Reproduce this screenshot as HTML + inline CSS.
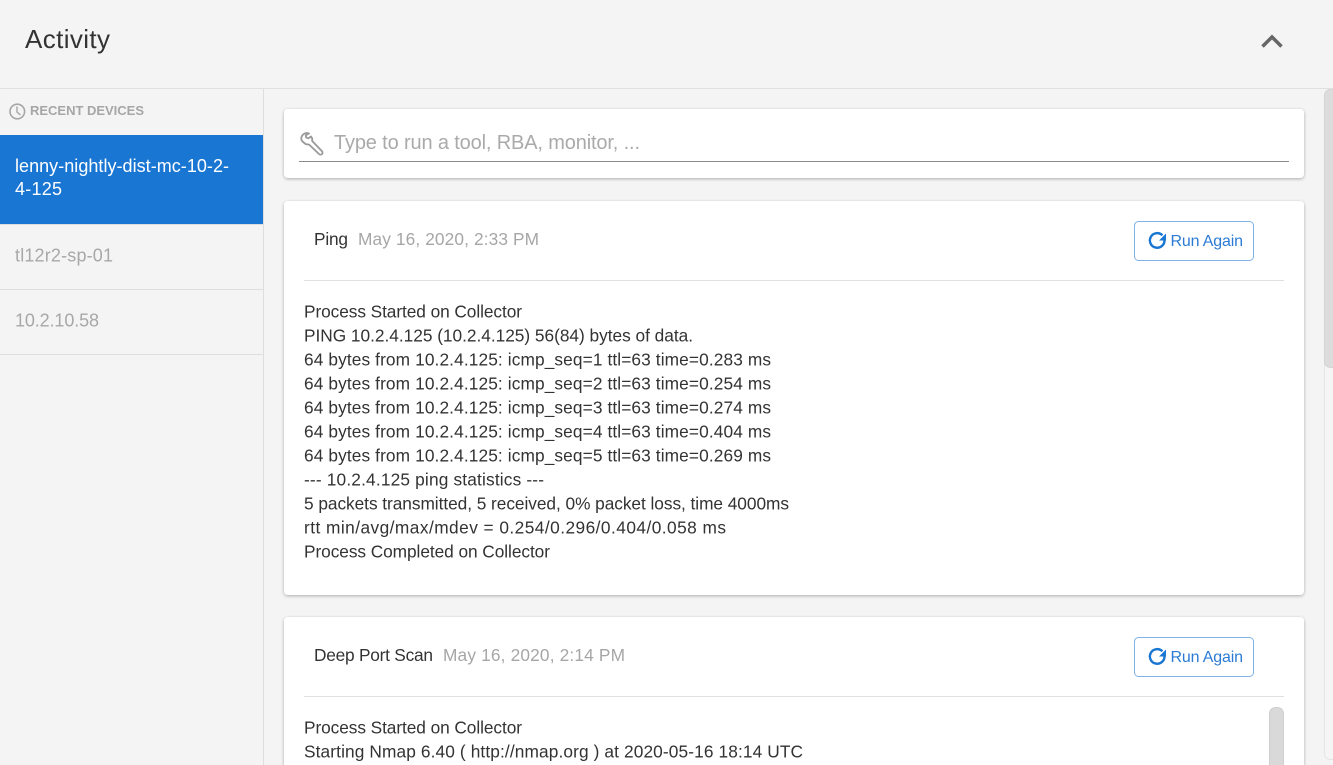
<!DOCTYPE html>
<html>
<head>
<meta charset="utf-8">
<style>
html,body{margin:0;padding:0;width:1333px;height:765px;overflow:hidden;background:#f4f4f4}
svg{display:block}
text{font-family:"Liberation Sans",sans-serif;font-size:17.3px;fill:#333}
.g{fill:#a6a6a6}
.b{fill:#2b7bd6;font-size:16px}
.w{fill:#fff;font-size:18px}
.s{fill:#a8a8a8;font-size:18px}
</style>
</head>
<body>
<svg width="1333" height="765" viewBox="0 0 1333 765" xmlns="http://www.w3.org/2000/svg">
<defs>
<filter id="sh" x="-5%" y="-20%" width="110%" height="140%"><feDropShadow dx="0" dy="1" stdDeviation="1.5" flood-color="#000" flood-opacity=".3"/></filter>
</defs>
<rect width="1333" height="765" fill="#f4f4f4"/>
<rect x="0" y="88" width="1333" height="1" fill="#e0e0e0"/>
<text x="25" y="48" style="font-size:26px;fill:#333" textLength="85" lengthAdjust="spacing">Activity</text>
<path d="M1262.500 46.500L1272 37l9.500 9.500" fill="none" stroke="#666" stroke-width="3.500"/>

<rect x="263" y="89" width="1" height="676" fill="#dedede"/>
<circle cx="17.300" cy="111.500" r="7.300" fill="none" stroke="#a6a6a6" stroke-width="1.600"/>
<path d="M17 106.500V112L20.500 115" fill="none" stroke="#a6a6a6" stroke-width="1.400"/>
<text x="30" y="115" style="font-size:13px;font-weight:bold;fill:#a6a6a6" textLength="114" lengthAdjust="spacing">RECENT DEVICES</text>
<rect x="0" y="135" width="263" height="89" fill="#1976d2"/>
<text class="w" x="15" y="172" textLength="214" lengthAdjust="spacing">lenny-nightly-dist-mc-10-2-</text>
<text class="w" x="15" y="195" textLength="47" lengthAdjust="spacing">4-125</text>
<rect x="0" y="224" width="263" height="1" fill="#dedede"/>
<text class="s" x="15" y="261.500" textLength="98" lengthAdjust="spacing">tl12r2-sp-01</text>
<rect x="0" y="289" width="263" height="1" fill="#dedede"/>
<text class="s" x="15" y="326.500" textLength="84" lengthAdjust="spacing">10.2.10.58</text>
<rect x="0" y="354" width="263" height="1" fill="#dedede"/>

<rect x="284" y="109" width="1020" height="69" rx="4" fill="#fff" filter="url(#sh)"/>
<path d="M309 133.500a5.500 5.500 0 0 0-7.500 6.500l1 1.500 3 2.500 2 .5 1.500 0 10 9.500a2 2 0 0 0 3-2.800l-9.800-10.200 0-2.500-1.200-2-2.500 1.800-2.300-.8-.5-2.200z" fill="none" stroke="#9a9a9a" stroke-width="1.800" stroke-linejoin="round"/>
<text x="334" y="149" style="font-size:20px;fill:#aaa" textLength="306" lengthAdjust="spacing">Type to run a tool, RBA, monitor, ...</text>
<rect x="299" y="161" width="990" height="1" fill="#8a8a8a"/>

<rect x="284" y="201" width="1020" height="394" rx="4" fill="#fff" filter="url(#sh)"/>
<text x="314" y="245" textLength="34" lengthAdjust="spacing">Ping</text>
<text class="g" x="358" y="245" textLength="181" lengthAdjust="spacing">May 16, 2020, 2:33 PM</text>
<rect x="1134.500" y="221.500" width="119" height="39" rx="4" fill="#fff" stroke="#7fb2e8"/>
<path d="M1164.500 240.500a7.300 7.300 0 1 1-2.100-5.200" fill="none" stroke="#1976d2" stroke-width="2.400"/>
<path d="M1166 233.500v7h-7z" fill="#1976d2"/>
<text class="b" x="1170.500" y="246" textLength="72.500" lengthAdjust="spacing">Run Again</text>
<rect x="304" y="280" width="980" height="1" fill="#e0e0e0"/>
<text x="304" y="317.500" textLength="218" lengthAdjust="spacing">Process Started on Collector</text>
<text x="304" y="341.500" textLength="389" lengthAdjust="spacing">PING 10.2.4.125 (10.2.4.125) 56(84) bytes of data.</text>
<text x="304" y="365.500" textLength="467" lengthAdjust="spacing">64 bytes from 10.2.4.125: icmp_seq=1 ttl=63 time=0.283 ms</text>
<text x="304" y="389.500" textLength="467" lengthAdjust="spacing">64 bytes from 10.2.4.125: icmp_seq=2 ttl=63 time=0.254 ms</text>
<text x="304" y="413.500" textLength="467" lengthAdjust="spacing">64 bytes from 10.2.4.125: icmp_seq=3 ttl=63 time=0.274 ms</text>
<text x="304" y="437.500" textLength="467" lengthAdjust="spacing">64 bytes from 10.2.4.125: icmp_seq=4 ttl=63 time=0.404 ms</text>
<text x="304" y="461.500" textLength="467" lengthAdjust="spacing">64 bytes from 10.2.4.125: icmp_seq=5 ttl=63 time=0.269 ms</text>
<text x="304" y="485.500" textLength="240" lengthAdjust="spacing">--- 10.2.4.125 ping statistics ---</text>
<text x="304" y="509.500" textLength="485" lengthAdjust="spacing">5 packets transmitted, 5 received, 0% packet loss, time 4000ms</text>
<text x="304" y="533.500" textLength="422" lengthAdjust="spacing">rtt min/avg/max/mdev = 0.254/0.296/0.404/0.058 ms</text>
<text x="304" y="557.500" textLength="246" lengthAdjust="spacing">Process Completed on Collector</text>

<rect x="284" y="617" width="1020" height="170" rx="4" fill="#fff" filter="url(#sh)"/>
<text x="314" y="661" textLength="119" lengthAdjust="spacing">Deep Port Scan</text>
<text class="g" x="443" y="661" textLength="182" lengthAdjust="spacing">May 16, 2020, 2:14 PM</text>
<rect x="1134.500" y="637.500" width="119" height="39" rx="4" fill="#fff" stroke="#7fb2e8"/>
<path d="M1164.500 656.500a7.300 7.300 0 1 1-2.100-5.200" fill="none" stroke="#1976d2" stroke-width="2.400"/>
<path d="M1166 649.500v7h-7z" fill="#1976d2"/>
<text class="b" x="1170.500" y="662" textLength="72.500" lengthAdjust="spacing">Run Again</text>
<rect x="304" y="696" width="980" height="1" fill="#e0e0e0"/>
<text x="304" y="733.500" textLength="218" lengthAdjust="spacing">Process Started on Collector</text>
<text x="304" y="757.500" textLength="499" lengthAdjust="spacing">Starting Nmap 6.40 ( http://nmap.org ) at 2020-05-16 18:14 UTC</text>
<rect x="1269.500" y="707.500" width="14" height="70" rx="6" fill="#d9d9d9" stroke="#cfcfcf"/>

<rect x="1324.500" y="89.500" width="16" height="670" rx="6" fill="#f5f5f5" stroke="#e4e4e4"/>
<rect x="1324.500" y="89.500" width="16" height="278" rx="6" fill="#dcdcdc" stroke="#d4d4d4"/>
</svg>
</body>
</html>
